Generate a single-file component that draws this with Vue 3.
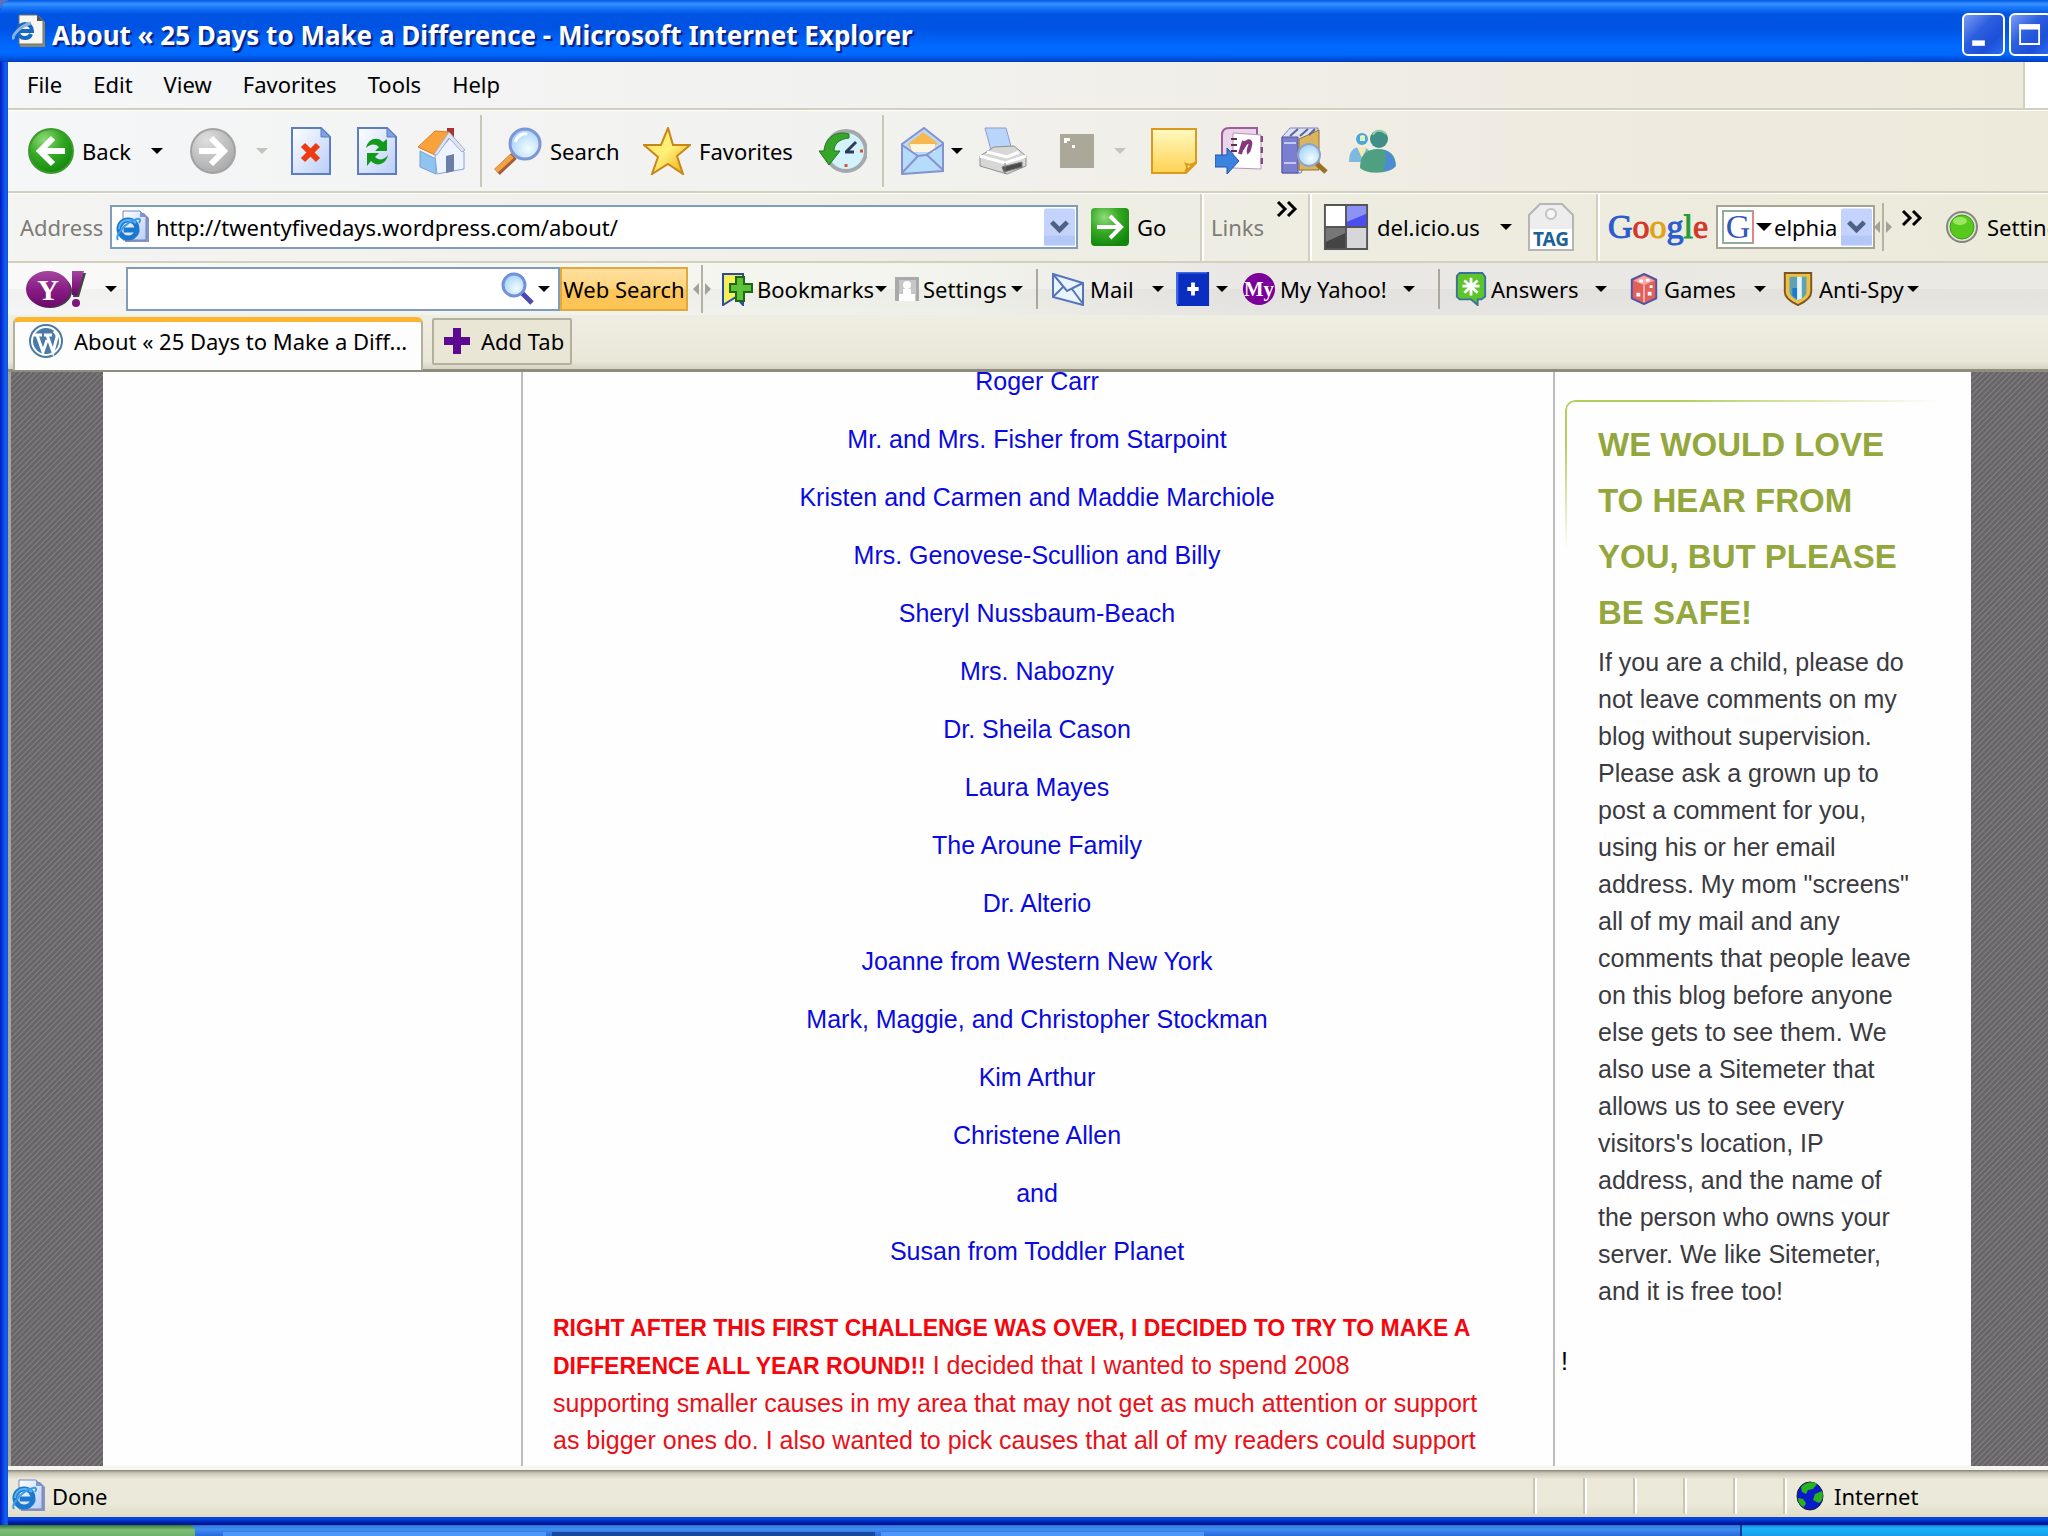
<script setup>
import { ref } from "vue";

const address = ref("http://twentyfivedays.wordpress.com/about/");
const yahooQuery = ref("");
const googleQuery = ref("elphia");

const menus = ["File", "Edit", "View", "Favorites", "Tools", "Help"];

const thanks = [
  "Roger Carr",
  "Mr. and Mrs. Fisher from Starpoint",
  "Kristen and Carmen and Maddie Marchiole",
  "Mrs. Genovese-Scullion and Billy",
  "Sheryl Nussbaum-Beach",
  "Mrs. Nabozny",
  "Dr. Sheila Cason",
  "Laura Mayes",
  "The Aroune Family",
  "Dr. Alterio",
  "Joanne from Western New York",
  "Mark, Maggie, and Christopher Stockman",
  "Kim Arthur",
  "Christene Allen",
  "and",
  "Susan from Toddler Planet",
];

const safety = `If you are a child, please do
not leave comments on my
blog without supervision.
Please ask a grown up to
post a comment for you,
using his or her email
address. My mom "screens"
all of my mail and any
comments that people leave
on this blog before anyone
else gets to see them. We
also use a Sitemeter that
allows us to see every
visitors's location, IP
address, and the name of
the person who owns your
server. We like Sitemeter,
and it is free too!`;
</script>

<template>
  <div class="desktop">
    <!-- shared icon shapes -->
    <svg class="defs" aria-hidden="true">
      <defs>
        <linearGradient id="paper" x1="0" y1="0" x2="1" y2="1">
          <stop offset="0" stop-color="#fff" />
          <stop offset="1" stop-color="#b9cdf8" />
        </linearGradient>
        <radialGradient id="green" cx=".35" cy=".25" r=".8">
          <stop offset="0" stop-color="#8fdc78" />
          <stop offset=".5" stop-color="#35a824" />
          <stop offset="1" stop-color="#12860c" />
        </radialGradient>
        <radialGradient id="gray" cx=".35" cy=".25" r=".8">
          <stop offset="0" stop-color="#dedede" />
          <stop offset="1" stop-color="#a9a9a9" />
        </radialGradient>
        <radialGradient id="lens" cx=".6" cy=".65" r=".7">
          <stop offset="0" stop-color="#f2fdff" />
          <stop offset="1" stop-color="#9fd0fa" />
        </radialGradient>
        <linearGradient id="gold" x1="0" y1="0" x2="1" y2="1">
          <stop offset="0" stop-color="#ffe45c" />
          <stop offset=".5" stop-color="#fff07a" />
          <stop offset="1" stop-color="#e9a400" />
        </linearGradient>
        <linearGradient id="note" x1="0" y1="0" x2="0" y2="1">
          <stop offset="0" stop-color="#fffac0" />
          <stop offset="1" stop-color="#ffd253" />
        </linearGradient>
        <linearGradient id="purple" x1="0" y1="0" x2="0" y2="1">
          <stop offset="0" stop-color="#a5479f" />
          <stop offset=".5" stop-color="#8a1d86" />
          <stop offset="1" stop-color="#6d0a6b" />
        </linearGradient>
      </defs>
      <symbol id="ie" viewBox="0 0 34 34">
        <path d="M9 3h19l5 5v24H9z" fill="#8a93bd" />
        <path d="M7 1h17l6 6v23H7z" fill="url(#paper)" stroke="#6f87c4" />
        <path d="M24 1v6h6z" fill="#7d96d8" />
        <path d="M21 22c-2 4-5 6-9 6-5 0-9-4-9-9s4-9 9-9c6 0 9 4 9 10H8" fill="none" stroke="#1b78cf" stroke-width="5" />
        <path d="M20 13c-2-2-5-3-8-3-5 0-9 4-9 9" fill="none" stroke="#56b8f4" stroke-width="2" />
        <path d="M2 30c-3-4 6-17 19-21 3-1 4 1 2 4" fill="none" stroke="#3a9be6" stroke-width="2" />
      </symbol>
      <symbol id="grip" viewBox="0 0 20 48">
        <path d="M10 0v48" stroke="#b5b2a4" stroke-width="2" />
        <path d="M1 24l6-6v12zM19 24l-6-6v12z" fill="#a3a198" />
      </symbol>
      <symbol id="chevrons" viewBox="0 0 22 16">
        <path d="M2 1l7 7-7 7M12 1l7 7-7 7" fill="none" stroke="#000" stroke-width="3" />
      </symbol>
      <symbol id="drop" viewBox="0 0 32 38">
        <rect width="32" height="38" rx="2" fill="#c3d3fb" />
        <path d="M0 28h32v10H0z" fill="#b4c8f8" />
        <path d="M8 14l8 8 8-8" fill="none" stroke="#4d6185" stroke-width="5" />
      </symbol>
    </svg>

    <div class="window">
      <header class="titlebar">
        <svg class="title-icon" viewBox="0 0 34 34">
          <path d="M8 2h19l6 6v25H8z" fill="#8b8874" />
          <path d="M7 1h18l6 6v23H7z" fill="#f6f6f2" stroke="#77745f" />
          <path d="M25 1v6h6z" fill="#55534a" />
          <path d="M19 20c-1 3-3 4-6 4-4 0-7-3-7-7 0-4 3-7 7-7s7 3 7 7H8" fill="none" stroke="#1668c4" stroke-width="4" />
          <path d="M2 25c-3-3 6-13 17-16" fill="none" stroke="#8fb2d8" stroke-width="3" />
        </svg>
        <h1>About « 25 Days to Make a Difference - Microsoft Internet Explorer</h1>
        <div class="controls">
          <button aria-label="Minimize">
            <svg viewBox="0 0 43 43"><path d="M9 28h14v6H9z" fill="#fff" /></svg>
          </button>
          <button aria-label="Maximize">
            <svg viewBox="0 0 43 43"><path d="M10 12h21v20H10z" fill="none" stroke="#fff" stroke-width="2" /><path d="M9 10h23v6H9z" fill="#fff" /></svg>
          </button>
        </div>
      </header>

      <nav class="menubar">
        <button v-for="menu in menus" :key="menu">{{ menu }}</button>
        <span class="throbber"></span>
      </nav>

      <div class="toolbar">
        <button class="item">
          <svg class="i46" viewBox="0 0 46 46">
            <circle cx="23" cy="23" r="22" fill="url(#green)" stroke="#3c9a2c" stroke-width="2" />
            <path d="M37 23H13M25 10L12 23l13 13" fill="none" stroke="#fff" stroke-width="6" />
          </svg>
          <span>Back</span><i class="caret far"></i>
        </button>
        <button class="item" aria-label="Forward">
          <svg class="i46" viewBox="0 0 46 46">
            <circle cx="23" cy="23" r="22" fill="url(#gray)" stroke="#a2a2a2" stroke-width="2" />
            <path d="M9 23h24M21 10l13 13-13 13" fill="none" stroke="#fff" stroke-width="6" />
          </svg>
          <i class="caret far dim"></i>
        </button>
        <button class="item" aria-label="Stop">
          <svg class="page-icon" viewBox="0 0 40 48">
            <path d="M1 1h29l9 9v37H1z" fill="url(#paper)" stroke="#5c7cc4" stroke-width="2" />
            <path d="M30 1v9h9z" fill="#7fa2e0" stroke="#5c7cc4" />
            <path d="M12 18l15 15M27 18L12 33" stroke="#ee3a12" stroke-width="6" />
          </svg>
        </button>
        <button class="item" aria-label="Refresh">
          <svg class="page-icon" viewBox="0 0 40 48">
            <path d="M1 1h29l9 9v37H1z" fill="url(#paper)" stroke="#5c7cc4" stroke-width="2" />
            <path d="M30 1v9h9z" fill="#7fa2e0" stroke="#5c7cc4" />
            <path d="M9 21c2-10 12-12 17-6l4-3v12H18l4-4c-4-4-9-3-13 1zM31 28c-2 10-12 12-17 6l-4 5V26h12l-4 4c4 4 9 3 13-2z" fill="#139a1c" />
          </svg>
        </button>
        <button class="item" aria-label="Home">
          <svg class="i48" viewBox="0 0 48 48">
            <path d="M29 1h7v14h-7z" fill="#a8342c" />
            <path d="M2 24l16 8v15L2 40z" fill="#8fc4ee" stroke="#7ba0d2" />
            <path d="M17 29L32 11l14 14v17L19 47z" fill="#eef4ff" stroke="#88a2d4" />
            <path d="M28 29l8-2v17l-8 2z" fill="#6c7da8" />
            <path d="M0 20L17 4l14 1-14 23z" fill="#f9a13a" stroke="#dd7c22" />
            <path d="M31 5l16 18-3 2-13-14-12 17-3-1z" fill="#dfe4f2" stroke="#a5aed0" />
          </svg>
        </button>
        <i class="rule"></i>
        <button class="item">
          <svg class="i48" viewBox="0 0 48 48">
            <path d="M20 29L3 45" stroke="#a55c3a" stroke-width="8" />
            <path d="M18 29L2 44" stroke="#f2a143" stroke-width="5" />
            <circle cx="31" cy="17" r="15" fill="url(#lens)" stroke="#7f95d6" stroke-width="3" />
            <path d="M21 15c2-6 7-9 12-8" fill="none" stroke="#fff" stroke-width="3" />
          </svg>
          <span>Search</span>
        </button>
        <button class="item">
          <svg class="i48" viewBox="0 0 48 48">
            <path d="M25 1l5 17h17L34 29l6 18-15-10L9 47l6-17L1 18h17z" fill="url(#gold)" stroke="#c8861a" stroke-width="2" />
          </svg>
          <span>Favorites</span>
        </button>
        <button class="item" aria-label="History">
          <svg class="i48" viewBox="0 0 48 48">
            <circle cx="27" cy="24" r="20" fill="#d4f2fb" stroke="#a4a9b0" stroke-width="4" />
            <path d="M27 25l10-10M26 25h9" stroke="#2b3d58" stroke-width="3" />
            <path d="M27 37v3M41 24h3" stroke="#e2502c" stroke-width="3" />
            <path d="M30 7C17 3 6 11 5 24H0l10 14 11-14h-6c0-7 5-12 15-13z" fill="#36a52a" stroke="#1c7a1b" />
          </svg>
        </button>
        <i class="rule"></i>
        <button class="item tight" aria-label="Mail">
          <svg class="i44" viewBox="0 0 44 48">
            <path d="M1 17L23 1l19 15v28L1 47z" fill="#b5dcfb" stroke="#8791cf" stroke-width="2" />
            <path d="M7 17L22 5l15 11-8 8H11z" fill="#f8b850" />
            <path d="M9 17h25v8H11z" fill="#fff6e2" />
            <path d="M1 18l16 11 8-1 17-11M1 46l16-17M42 43L26 28" fill="none" stroke="#8791cf" stroke-width="2" />
          </svg>
          <i class="caret"></i>
        </button>
        <button class="item" aria-label="Print">
          <svg class="i48" viewBox="0 0 48 48">
            <path d="M6 1h21l6 22H12z" fill="#b9d6fa" stroke="#8e9bc8" />
            <path d="M1 29l14-9 20-1 12 10v10L28 47 1 39z" fill="#d7d7d7" stroke="#8f8f8f" />
            <path d="M1 29l25 7 21-7M8 25l20 5 12-5" fill="none" stroke="#fff" stroke-width="3" />
            <path d="M26 36v11M23 40l20-5v5l-18 5z" fill="#4a4a4a" stroke="#777" />
          </svg>
        </button>
        <button class="item" aria-label="Edit" disabled>
          <svg class="i34" viewBox="0 0 34 34">
            <path d="M0 0h34v34H0z" fill="#aca899" />
            <path d="M4 4h6v3H7v2H4zM12 11h3v3h-3z" fill="#fff" />
          </svg>
          <i class="caret far dim"></i>
        </button>
        <button class="item" aria-label="Notes">
          <svg class="i46" viewBox="0 0 46 46">
            <path d="M1 1h44v34L35 45H1z" fill="url(#note)" stroke="#d99a1e" stroke-width="2" />
            <path d="M34 44c3-3 2-6 1-8 3 1 7 1 10-2z" fill="#fff3ae" stroke="#d99a1e" stroke-width="2" />
          </svg>
        </button>
        <button class="item" aria-label="OneNote">
          <svg class="i48" viewBox="0 0 48 48">
            <path d="M7 8c0-5 3-7 7-7h28v38H7z" fill="#e9d5ea" stroke="#9a5f97" stroke-width="2" />
            <path d="M18 6l28 2v34l-28-1z" fill="#fff" stroke="#b893b8" />
            <path d="M47 9v6M47 20v6M47 31v6" stroke="#7f4b80" stroke-width="3" />
            <path d="M16 12h6M16 18h6M16 24h6" stroke="#5c3050" stroke-width="2" />
            <path d="M25 27l4-13M27 22c3-6 6-9 8-7s-3 9-1 11" fill="none" stroke="#85387c" stroke-width="4" />
            <path d="M0 28h12v-7l12 13-12 13v-7H0z" fill="#3b83de" stroke="#1e53ae" />
          </svg>
        </button>
        <button class="item" aria-label="Research">
          <svg class="i48" viewBox="0 0 48 48">
            <path d="M1 10L9 1h28v8L20 46H1z" fill="#dfe2f0" stroke="#7c83b8" />
            <path d="M1 10h16v36H1z" fill="#7b7fd0" stroke="#4e529c" />
            <path d="M3 16h12M3 36h12" stroke="#c5c8f4" stroke-width="2" />
            <path d="M18 12l20-9v40H18z" fill="#d9b55e" stroke="#8f7333" />
            <path d="M9 9l8-7M19 9l8-7M28 8l6-6" stroke="#5c62a6" stroke-width="2" />
            <path d="M35 36l10 9" stroke="#9a7024" stroke-width="5" />
            <circle cx="28" cy="28" r="11" fill="url(#lens)" stroke="#8fa4c8" stroke-width="2" />
          </svg>
        </button>
        <button class="item" aria-label="Messenger">
          <svg class="i48" viewBox="0 0 48 48">
            <path d="M1 35c0-11 4-15 12-15s10 5 10 15z" fill="#7fb9df" />
            <path d="M9 20l5 11 5-11z" fill="#f4ebb2" />
            <circle cx="14" cy="12" r="6" fill="#4ba6dc" />
            <path d="M12 9a4 4 0 0 1 5 0v5h-5z" fill="#e5efb0" />
            <path d="M12 41c0-13 6-19 18-19s18 7 18 17c-6 8-29 9-36 2z" fill="#4f9f83" />
            <path d="M36 23c7 2 12 9 11 16-3 4-7 5-12 5 3-7 4-14 1-21z" fill="#4b8bd6" />
            <circle cx="31" cy="12" r="9" fill="#3f8f86" />
            <path d="M25 8c2-5 9-6 13-1" fill="none" stroke="#8fd2a0" stroke-width="2" />
          </svg>
        </button>
      </div>

      <div class="linkbar">
        <div class="band address-band">
          <label for="address" class="faint">Address</label>
          <div class="field address-field">
            <svg class="i34"><use href="#ie" /></svg>
            <input id="address" v-model="address" type="text" />
            <button class="drop" aria-label="Show history"><svg><use href="#drop" /></svg></button>
          </div>
          <button class="item">
            <svg class="i38" viewBox="0 0 38 38">
              <rect width="38" height="38" rx="4" fill="url(#green)" />
              <path d="M6 19h23M19 8l11 11-11 11" fill="none" stroke="#fff" stroke-width="4" />
            </svg>
            <span>Go</span>
          </button>
        </div>
        <div class="band links-band">
          <span class="faint">Links</span>
          <button class="item more" aria-label="More links"><svg><use href="#chevrons" /></svg></button>
        </div>
        <div class="band delicious-band">
          <button class="item">
            <svg class="i46" viewBox="0 0 46 48">
              <path d="M1 1h44v46H1z" fill="#fff" />
              <path d="M23 1h22v23H23z" fill="#4a4ff0" />
              <path d="M23 1h22v9L23 19z" fill="#8d92f6" />
              <path d="M1 24h22v23H1z" fill="#444" />
              <path d="M1 24h22v6L1 40z" fill="#777" />
              <path d="M23 24h22v23H23z" fill="#d7d7da" />
              <path d="M1 1h44v46H1zM23 1v46M1 24h44" fill="none" stroke="#555" stroke-width="2" />
            </svg>
            <span>del.icio.us</span><i class="caret far"></i>
          </button>
          <button class="item tag" aria-label="Tag this page">
            <svg viewBox="0 0 46 48">
              <path d="M1 12L12 1h22l11 11v35H1z" fill="#ededed" stroke="#b5b5b5" stroke-width="2" />
              <path d="M2 26h42v20H2z" fill="#fff" />
              <circle cx="23" cy="11" r="5" fill="#f6f6f6" stroke="#c2c2c2" stroke-width="2" />
              <text x="23" y="43" text-anchor="middle">TAG</text>
            </svg>
          </button>
        </div>
        <div class="band google-band">
          <a class="google" href="#"><b class="gb">G</b><b class="gr">o</b><b class="gy">o</b><b class="gb">g</b><b class="gg">l</b><b class="gr">e</b></a>
          <div class="field google-field">
            <span class="g-box">G</span><i class="caret big"></i>
            <input v-model="googleQuery" type="text" aria-label="Google search" />
            <button class="drop" aria-label="Past searches"><svg><use href="#drop" /></svg></button>
          </div>
          <svg class="grip"><use href="#grip" /></svg>
          <button class="item more" aria-label="More"><svg><use href="#chevrons" /></svg></button>
          <button class="item settings">
            <svg class="i34" viewBox="0 0 34 34">
              <circle cx="17" cy="17" r="15" fill="#e2e2dc" stroke="#85857c" stroke-width="2" />
              <circle cx="17" cy="17" r="12" fill="#57c81c" stroke="#3d9c14" />
              <ellipse cx="15" cy="11" rx="7" ry="4" fill="#9be860" />
            </svg>
            <span>Settings</span>
          </button>
        </div>
      </div>

      <div class="yahoobar">
        <button class="item tight" aria-label="Yahoo!">
          <svg class="yahoo" viewBox="0 0 62 40">
            <ellipse cx="25" cy="22" rx="22" ry="17" fill="#4c3350" />
            <ellipse cx="23" cy="20" rx="22" ry="18" fill="url(#purple)" />
            <path d="M49 4h12l-7 24h-6z" fill="#444" />
            <path d="M47 2h12l-7 24h-5z" fill="url(#purple)" />
            <circle cx="51" cy="34" r="4" fill="#7a1778" />
            <text x="23" y="31" text-anchor="middle">Y</text>
          </svg>
          <i class="caret far"></i>
        </button>
        <div class="field yahoo-field">
          <input v-model="yahooQuery" type="text" aria-label="Yahoo search" />
          <svg class="i34" viewBox="0 0 34 34">
            <path d="M20 20l11 11" stroke="#4a49b0" stroke-width="5" />
            <circle cx="13" cy="13" r="11" fill="url(#lens)" stroke="#7390dc" stroke-width="3" />
          </svg>
          <i class="caret"></i>
        </div>
        <button class="web-search">Web Search</button>
        <svg class="grip"><use href="#grip" /></svg>
        <button class="item snug">
          <svg class="i32" viewBox="0 0 32 34">
            <path d="M2 2h20v31l-7-8-13 8z" fill="#f3ee5a" stroke="#2b4a9c" stroke-width="2" />
            <path d="M15 5h8v7h8v8h-8v9h-8v-9H9v-8h6z" fill="#5cc235" stroke="#20661a" stroke-width="2" />
          </svg>
          <span>Bookmarks</span><i class="caret near"></i>
        </button>
        <button class="item snug">
          <svg class="i24" viewBox="0 0 24 24">
            <path d="M0 0h24v24H0z" fill="#a9a9a9" />
            <path d="M4 3h17v21H4z" fill="#c6c6c6" />
            <circle cx="12" cy="8" r="4" fill="#fff" />
            <path d="M8 12h8v5h4v7H4v-7h4z" fill="#fff" />
          </svg>
          <span>Settings</span><i class="caret"></i>
        </button>
        <i class="rule"></i>
        <button class="item tight">
          <svg class="i32" viewBox="0 0 32 34">
            <path d="M1 2l30 9v22L1 25z" fill="#eaf4ff" stroke="#5674b8" stroke-width="2" />
            <path d="M1 2l14 17 16-8M1 25l10-10M31 32L20 17" fill="none" stroke="#5674b8" stroke-width="2" />
          </svg>
          <span>Mail</span><i class="caret far"></i>
        </button>
        <button class="item tight" aria-label="Add button">
          <svg class="i34" viewBox="0 0 34 36">
            <path d="M0 0h34v36H0z" fill="#0a2fc0" />
            <path d="M0 34V0h32" fill="none" stroke="#3f6ae6" stroke-width="3" />
            <path d="M17 11v14M11 18h12" stroke="#fff" stroke-width="4" />
          </svg>
          <i class="caret"></i>
        </button>
        <button class="item snug">
          <svg class="i34 my" viewBox="0 0 34 36">
            <circle cx="17" cy="18" r="17" fill="#7b0099" />
            <text x="17" y="25" text-anchor="middle">My</text>
          </svg>
          <span>My Yahoo!</span><i class="caret far"></i>
        </button>
        <i class="rule"></i>
        <button class="item snug">
          <svg class="i32" viewBox="0 0 32 36">
            <path d="M4 1h24l3 4v21l-4 3h-4v6l-7-6H4l-3-3V4z" fill="#5cc52c" stroke="#3d6f9c" stroke-width="2" />
            <path d="M16 6v19M7 15h18M9 9l14 13M23 9L9 22" stroke="#fff" stroke-width="3" />
          </svg>
          <span>Answers</span><i class="caret far"></i>
        </button>
        <button class="item tight">
          <svg class="i28" viewBox="0 0 28 34">
            <path d="M14 1l13 6v20l-13 6-13-6V7z" fill="#e2605c" stroke="#4a53a4" stroke-width="2" />
            <path d="M3 8l11 5 11-5-11-5z" fill="#f5a9a4" />
            <path d="M14 13v18" stroke="#f2b2ae" stroke-width="2" />
            <path d="M6 21h4v4H6zM18 20h4v4h-4zM9 7h4v3H9zM16 6h4v3h-4zM20 13h3v3h-3z" fill="#fff" />
          </svg>
          <span>Games</span><i class="caret far"></i>
        </button>
        <button class="item tight">
          <svg class="i30" viewBox="0 0 30 36">
            <path d="M1 1h28v20c0 7-7 11-14 14C8 32 1 28 1 21z" fill="#ecc046" stroke="#7c5420" stroke-width="2" />
            <path d="M6 5h18v15c0 5-4 8-9 10-5-2-9-5-9-10z" fill="#5ea2b4" />
            <path d="M14 5h5v23l-5 2z" fill="#e3f5fa" />
            <path d="M9 17h5v12l-5-4z" fill="#1f78d0" />
          </svg>
          <span>Anti-Spy</span><i class="caret near"></i>
        </button>
      </div>

      <div class="tabs">
        <button class="tab active">
          <svg class="i34" viewBox="0 0 34 34">
            <circle cx="17" cy="17" r="16" fill="#fff" stroke="#4a7ba6" stroke-width="2" />
            <circle cx="17" cy="17" r="13" fill="#4a7ba6" />
            <path d="M5 11h8M15 11h8M8 11l6 17 4-12M18 11l6 17 4-15c0-3-2-5-3-6" fill="none" stroke="#fff" stroke-width="3" />
          </svg>
          <span>About « 25 Days to Make a Diff...</span>
        </button>
        <button class="tab">
          <svg class="i26" viewBox="0 0 26 26"><path d="M9 0h8v9h9v8h-9v9H9v-9H0V9h9z" fill="#5b0a91" /></svg>
          <span>Add Tab</span>
        </button>
      </div>

      <main class="viewport">
        <div class="page">
          <div class="column"></div>
          <article class="column story">
            <p v-for="name in thanks" :key="name" class="name">{{ name }}</p>
            <p class="challenge">
              <strong>RIGHT AFTER THIS FIRST CHALLENGE WAS OVER, I DECIDED TO TRY TO MAKE A<br />DIFFERENCE ALL YEAR ROUND!!</strong>
              I decided that I wanted to spend 2008<br />
              supporting smaller causes in my area that may not get as much attention or support<br />
              as bigger ones do. I also wanted to pick causes that all of my readers could support
            </p>
          </article>
          <aside class="column sidebar">
            <section class="notice">
              <h2>We would love<br />to hear from<br />you, but please<br />be safe!</h2>
              <p>{{ safety }}</p>
            </section>
            <p class="stray">!</p>
          </aside>
        </div>
      </main>

      <footer class="status">
        <svg class="i34"><use href="#ie" /></svg>
        <span class="done">Done</span>
        <i v-for="n in 5" :key="n" class="pane"></i>
        <span class="zone">
          <svg class="i28" viewBox="0 0 28 30">
            <ellipse cx="14" cy="15" rx="13" ry="14" fill="#0a1cc8" stroke="#1c1c3c" />
            <path d="M5 6c4-5 13-6 16-3l-4 5-5 1-2 4-4-2zM19 13l7-3c2 6 0 10-3 12l-6-3zM2 17l5 1 3 4-2 4c-4-1-6-5-6-9z" fill="#26b31c" />
          </svg>
          Internet
        </span>
      </footer>
    </div>

    <div class="taskbar">
      <i class="start"></i>
      <i class="task"></i>
      <i class="task pressed"></i>
      <i class="task"></i>
      <i class="tray"></i>
    </div>
  </div>
</template>

<style>
body {
  margin: 0;
  overflow: hidden;
  background: #5a6fc0;
}
</style>

<style scoped>
.desktop {
  display: flex;
  flex-direction: column;
  height: 100vh;
  overflow: hidden;
  font-family: "Noto Sans", "DejaVu Sans", sans-serif;
  font-size: 22px;
  line-height: 30px;
  color: #000;
}

.defs {
  position: absolute;
  width: 0;
  height: 0;
}

.window {
  display: flex;
  flex-direction: column;
  flex: 1;
  min-height: 0;
  padding: 0 0 8px 8px;
  border-radius: 12px 0 0 0;
  overflow: hidden;
  background: linear-gradient(90deg, #0019c4, #0a44e0 3px, #0f62ee 6px, #0a50e0 8px, transparent 8px),
    linear-gradient(0deg, #00107c, #0022b4 3px, #0446dd 6px, #0446dd);
}

button {
  padding: 0;
  border: 0;
  background: none;
  font: inherit;
  color: inherit;
  white-space: nowrap;
}

input {
  min-width: 0;
  padding: 0;
  border: 0;
  outline: 0;
  background: transparent;
  font: inherit;
  color: inherit;
}

svg {
  display: block;
  flex: none;
}

/* title bar */
.titlebar {
  display: flex;
  align-items: center;
  flex: none;
  height: 62px;
  margin-left: -8px;
  padding-left: 12px;
  background: linear-gradient(180deg, #0058e6 0, #3a94ff 4px, #1c7cfa 7px, #0054e3 14px, #0053e2 28px, #0069ff 46px, #0069ff 54px, #0050dc 59px, #003cc0 62px);
}

.title-icon {
  width: 34px;
  height: 34px;
}

h1 {
  flex: 1;
  min-width: 0;
  margin: 0 0 0 6px;
  padding-top: 8px;
  font-size: 26px;
  font-weight: 700;
  line-height: 30px;
  white-space: nowrap;
  color: #fff;
  text-shadow: 2px 2px 1px #0a1e80;
}

.controls {
  display: flex;
  gap: 4px;
  margin-right: -4px;
  padding-top: 6px;
}

.controls button {
  width: 43px;
  height: 43px;
  border: 2px solid #fff;
  border-radius: 6px;
  background: linear-gradient(135deg, #7c9cf4, #2c5fe0 40%, #1d4fd8 70%, #2a6cf4);
}

.controls svg {
  width: 39px;
  height: 39px;
}

/* bars */
.menubar,
.toolbar,
.linkbar {
  flex: none;
  box-sizing: border-box;
  border-bottom: 2px solid #d2d0bd;
  background: linear-gradient(90deg, #f5f6f8, #f1f1ee 45%, #efeadf 80%, #edeadb);
}

.menubar {
  display: flex;
  align-items: center;
  gap: 31px;
  height: 48px;
  padding: 0 0 2px 19px;
}

.throbber {
  align-self: stretch;
  box-sizing: border-box;
  width: 25px;
  margin: 0 0 -2px auto;
  border-left: 2px solid #d2d0bd;
  background: #fff;
}

.toolbar {
  display: grid;
  grid-template-columns: 162px 101px 66px 61px 62px 14px 149px 176px 63px 19px 78px 81px 91px 64px 66px 67px 1fr;
  align-items: center;
  justify-items: start;
  height: 83px;
  padding-left: 20px;
  border-top: 1px solid #fff;
}

.item {
  display: flex;
  align-items: center;
  gap: 8px;
}

.item.tight {
  gap: 6px;
}

.item.snug {
  gap: 4px;
}

.caret {
  flex: none;
  width: 0;
  height: 0;
  border: 6px solid transparent;
  border-top-color: #000;
  border-bottom: 0;
}

.caret.far {
  margin-left: 12px;
}

.caret.near {
  margin-left: -3px;
}

.caret.dim {
  border-top-color: #c5c3bb;
}

.caret.big {
  border-width: 8px 8px 0;
}

.rule {
  width: 2px;
  height: 72px;
  background: #c9c7b8;
}

.i24 { width: 24px; height: 24px; }
.i26 { width: 26px; height: 26px; }
.i28 { width: 28px; height: 32px; }
.i30 { width: 30px; height: 34px; }
.i32 { width: 32px; height: 34px; }
.i34 { width: 34px; height: 34px; }
.i38 { width: 38px; height: 38px; }
.i44 { width: 44px; height: 48px; }
.i46 { width: 46px; height: 46px; }
.i48 { width: 48px; height: 48px; }
.page-icon { width: 40px; height: 48px; }

/* address, links and google bands */
.linkbar {
  display: flex;
  height: 70px;
  border-top: 1px solid #fff;
  background: linear-gradient(90deg, #f4f4f3, #efeee6 45%, #ecead9);
}

.band {
  display: flex;
  align-items: center;
  flex: none;
  box-sizing: border-box;
  padding-bottom: 2px;
  border-right: 2px solid #d2d0bd;
  box-shadow: 2px 0 0 #fff;
}

.faint {
  color: #7d7c76;
}

.field {
  display: flex;
  align-items: center;
  box-sizing: border-box;
  height: 44px;
  border: 2px solid #7f9db9;
  background: #fff;
}

.field input {
  flex: 1;
}

.drop {
  margin-right: 1px;
}

.drop svg {
  width: 31px;
  height: 38px;
}

.address-band {
  flex: 1;
  min-width: 0;
  padding-left: 12px;
}

.address-band label {
  flex: none;
  width: 90px;
}

.address-field {
  flex: 1;
  min-width: 0;
  padding-left: 4px;
  gap: 6px;
}

.address-band > .item {
  width: 109px;
  margin-left: 13px;
}

.links-band {
  width: 108px;
  padding-left: 9px;
  justify-content: space-between;
  padding-right: 10px;
}

.more {
  align-self: flex-start;
  padding-top: 7px;
}

.more svg {
  width: 22px;
  height: 16px;
}

.delicious-band {
  width: 288px;
  padding-left: 13px;
}

.tag {
  margin-left: 16px;
}

.tag svg {
  width: 46px;
  height: 48px;
}

.tag text {
  font-size: 19px;
  font-weight: 700;
  fill: #1d6296;
}

.google-band {
  width: 450px;
  padding-left: 10px;
  border-right: 0;
  overflow: hidden;
}

.google {
  flex: none;
  width: 108px;
  font-family: "Liberation Serif", serif;
  font-size: 34px;
  line-height: 40px;
  text-decoration: none;
}

.google b {
  font-weight: 400;
  -webkit-text-stroke: 1px currentColor;
}

.gb { color: #2a5bd0; }
.gr { color: #d3372c; }
.gy { color: #dba514; }
.gg { color: #239a3b; }

.google-field {
  flex: none;
  width: 159px;
  padding-left: 4px;
  border-color: #a5a393;
}

.g-box {
  width: 28px;
  height: 30px;
  margin-right: 2px;
  border: 2px solid #8fae9a;
  border-right-color: #d88;
  font-family: "Liberation Serif", serif;
  font-size: 34px;
  line-height: 30px;
  text-align: center;
  color: #3358b8;
}

.google-field input {
  margin-left: 2px;
}

.grip {
  width: 20px;
  height: 48px;
}

.google-band .grip {
  margin-left: -2px;
}

.google-band .more {
  margin-left: 8px;
  padding-top: 16px;
}

.settings {
  margin-left: 22px;
}

/* yahoo bar */
.yahoobar {
  display: grid;
  grid-template-columns: 101px 434px 132px 29px 174px 141px 16px 124px 66px 196px 17px 175px 153px 1fr;
  align-items: center;
  justify-items: start;
  flex: none;
  height: 52px;
  padding-left: 17px;
  background: linear-gradient(180deg, transparent 50%, rgba(120, 120, 120, 0.06) 50%, rgba(120, 120, 120, 0.03)),
    linear-gradient(90deg, #f9f9f9, #f4f4ee 45%, #e9e8e4 60%, #eae9e4);
}

.yahoobar .rule {
  height: 40px;
  background: #aaa89e;
}

.yahoo {
  width: 62px;
  height: 40px;
}

.yahoo text {
  font-family: "Liberation Serif", serif;
  font-size: 30px;
  font-weight: 700;
  fill: #fff;
}

.my text {
  font-family: "Liberation Serif", serif;
  font-size: 22px;
  font-weight: 700;
  fill: #fff;
}

.yahoo-field {
  width: 434px;
  padding-right: 8px;
  gap: 3px;
}

.web-search {
  width: 128px;
  height: 44px;
  border: 2px solid #e0a93c;
  background: linear-gradient(180deg, #ffe0a0, #ffd37c 50%, #fdc65a 50%, #fdc455);
}

/* tabs */
.tabs {
  display: flex;
  flex: none;
  gap: 9px;
  box-sizing: border-box;
  height: 57px;
  padding: 2px 0 0 5px;
  border-bottom: 3px solid #8f8d7e;
  background: linear-gradient(180deg, #efeee2, #e9e7d8 85%, #d6d3c2);
}

.tab {
  display: flex;
  align-items: center;
  gap: 11px;
  box-sizing: border-box;
  width: 140px;
  height: 47px;
  margin-top: 1px;
  padding: 0 4px 2px 10px;
  border: 2px solid #b3b09d;
  border-radius: 2px;
  background: #eae6d6;
}

.tab.active {
  width: 410px;
  height: 53px;
  margin-top: 0;
  padding: 0 0 10px 14px;
  border-top: 5px solid #fcb52f;
  border-bottom: 0;
  border-radius: 6px 6px 0 0;
  background: #fdfdfd;
}

/* page */
.viewport {
  flex: 1;
  min-height: 0;
  overflow: hidden;
  border-left: 3px solid #a8a598;
  background: repeating-linear-gradient(135deg, #656366 0, #6a686b 2px, #838184 3px, #656366 4px);
  font-family: "Liberation Sans", Arial, sans-serif;
  font-size: 25px;
  line-height: 37px;
}

.page {
  display: grid;
  grid-template-columns: 420fr 1032fr 416fr;
  height: 100%;
  margin: 0 77px 0 92px;
  background: #fefefe;
}

.column {
  box-sizing: border-box;
  border-right: 2px solid #bdbdbd;
}

.story {
  padding: 0 0 0 30px;
}

.name {
  margin: 0 32px 0 0;
  line-height: 58px;
  text-align: center;
  color: #0a0ae0;
}

/* scrolled part way down the article */
.name:first-child {
  margin-top: -20px;
}

.challenge {
  margin: 29px 0 0;
  white-space: nowrap;
  color: #ea1018;
}

.challenge strong {
  font-size: 23px;
  color: #f5060c;
}

.sidebar {
  border-right: 0;
}

.notice {
  position: relative;
  margin: 28px 0 0 10px;
  padding: 17px 0 0 33px;
}

.notice::before {
  content: "";
  position: absolute;
  inset: 0 30px 0 0;
  border: 2px solid #b3cf5c;
  border-right: 0;
  border-bottom: 0;
  border-radius: 10px 0 0 0;
  mask-image: radial-gradient(ellipse 375px 150px at 0 0, #000 30%, transparent);
}

h2 {
  margin: 0;
  font-size: 33px;
  line-height: 56px;
  font-weight: 700;
  text-transform: uppercase;
  color: #93a73d;
}

.notice p {
  margin: 3px 0 0;
  white-space: pre;
  color: #3a3a40;
}

.stray {
  margin: 33px 0 0 6px;
}

/* status bar */
.status {
  display: flex;
  align-items: center;
  flex: none;
  box-sizing: border-box;
  height: 51px;
  padding: 4px 0 0 4px;
  border-top: 4px solid #f6f5ee;
  background: linear-gradient(180deg, #85837a 0, #c9c6b8 3px, #ebe8d8 9px, #ebe9da 70%, #e0dcc6);
}

.done {
  flex: 1;
  padding-left: 6px;
}

.pane,
.zone {
  box-sizing: border-box;
  border-left: 2px solid #c9c6b2;
  box-shadow: inset 2px 0 0 #fff;
}

.pane {
  width: 50px;
  height: 36px;
}

.zone {
  display: flex;
  align-items: center;
  gap: 10px;
  width: 265px;
  height: 36px;
  padding-left: 11px;
}

/* taskbar */
.taskbar {
  display: flex;
  flex: none;
  height: 11px;
  background: linear-gradient(180deg, #2f6fd8, #4190f0 4px, #2b6be0 10px);
}

.start {
  width: 195px;
  margin-right: 28px;
  border-radius: 0 6px 0 0;
  background: linear-gradient(180deg, #2f7a34, #7fbd7b 5px, #6cb267);
}

.task {
  width: 323px;
  height: 4px;
  margin: 7px 6px 0 0;
  background: #4c97f8;
}

.task.pressed {
  background: #17489c;
}

.tray {
  flex: none;
  width: 308px;
  margin-left: auto;
  border-left: 2px solid #0c3c9c;
  box-sizing: border-box;
  background: linear-gradient(180deg, #1273d8, #1cb6f6 3px, #149bec);
}
</style>
